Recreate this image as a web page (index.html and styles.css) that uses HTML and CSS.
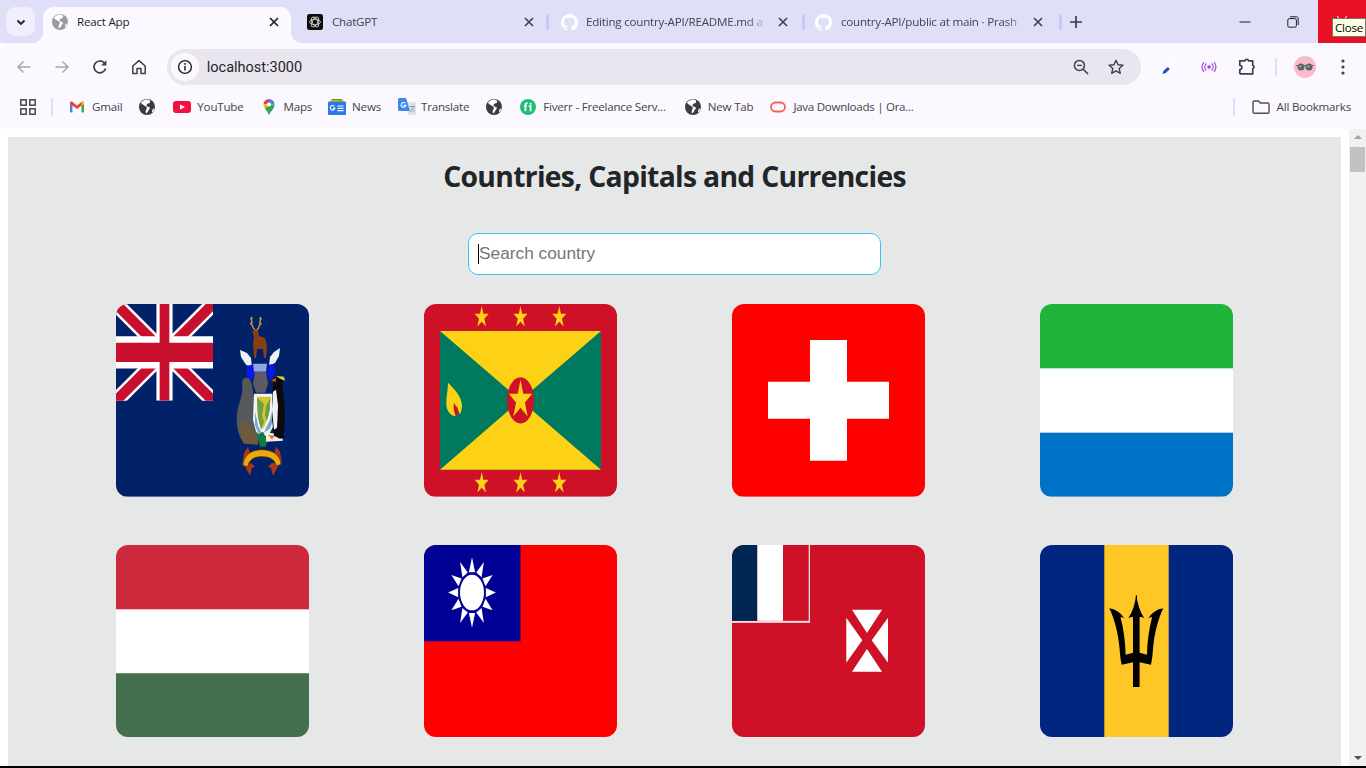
FILE: index.html
```html
<!DOCTYPE html>
<html lang="en">
<head>
<meta charset="utf-8">
<title>React App</title>
<link rel="stylesheet" href="styles.css">
</head>
<body>
<svg class="sprite" aria-hidden="true">
  <defs>
    <polygon id="star" points="0,-1 .2245,-.309 .951,-.309 .3633,.118 .5878,.809 0,.382 -.5878,.809 -.3633,.118 -.951,-.309 -.2245,-.309"/>
    <polygon id="ray" points="-4.600,-20.500 0,-35.300 4.600,-20.500"/>
    <clipPath id="jack"><path d="M30,15h30v15zv15h-30zh-30v-15zv-15h30z"/></clipPath>
    <symbol id="globe" viewBox="0 0 16 16">
      <circle cx="8" cy="8" r="8" fill="currentColor"/>
      <path d="M6.500 .6C5 1.600 3.200 2 2 3.400c.6 1.400 1.800 2.200 3.200 2.800.6 1.400 2 .6 2.400 1.800.4 1 .1 2-.5 2.800C6.600 11.600 6.600 13 7 14.400c1-.5 2-1.800 2.400-3 .6-1.200 1.600-1.600 1.400-3-1-.5-2-.7-3-1.100-.4-.9-.2-1.900.6-2.500.9-.7 2.100-.2 2.600-1.300.3-.8-.1-1.800-.7-2.500-1.300-.4-2.600-.4-3.800-.4zM15.400 9.200c-.9.3-1.800 1-2.200 2-.3.8-.3 1.600 0 2.300 1.200-1.100 2-2.600 2.200-4.300z" fill="#fff"/>
    </symbol>
    <symbol id="github" viewBox="0 0 16 16">
      <path fill="#fff" d="M8 0C3.580 0 0 3.580 0 8c0 3.540 2.290 6.530 5.470 7.590.4.07.55-.17.55-.38v-1.340c-2.230.48-2.690-1.070-2.690-1.070-.36-.92-.89-1.170-.89-1.170-.73-.5.05-.49.05-.49.8.06 1.230.83 1.230.83.71 1.220 1.870.87 2.330.66.07-.52.28-.87.5-1.070-1.780-.2-3.640-.89-3.640-3.950 0-.87.31-1.590.82-2.150-.08-.2-.36-1.020.08-2.120 0 0 .67-.21 2.200.82A7.600 7.600 0 0 1 8 3.870c.68 0 1.360.09 2 .27 1.530-1.040 2.200-.82 2.200-.82.44 1.100.16 1.920.08 2.120.51.56.82 1.270.82 2.150 0 3.070-1.870 3.750-3.650 3.950.29.25.54.73.54 1.480v2.200c0 .21.15.46.55.38A8 8 0 0 0 16 8c0-4.420-3.580-8-8-8z"/>
    </symbol>
    <symbol id="x" viewBox="0 0 12 12">
      <path d="M2 2l8 8M10 2l-8 8" fill="none" stroke="currentColor" stroke-width="1.700"/>
    </symbol>
  </defs>
</svg>

<header class="tabstrip">
  <button class="tab-search" aria-label="Search tabs">
    <svg viewBox="0 0 12 12" width="12" height="12"><path d="M2.500 4.500L6 8l3.500-3.500" fill="none" stroke="#1f1f1f" stroke-width="1.800"/></svg>
  </button>
  <div class="tab tab-active">
    <svg class="fav fav-grey" width="16" height="16"><use href="#globe"/></svg>
    <span class="tab-title">React App</span>
    <svg class="tab-x" width="12" height="12"><use href="#x"/></svg>
  </div>
  <div class="tab tab-gpt">
    <svg class="fav" viewBox="0 0 16 16" width="16" height="16">
      <rect width="16" height="16" rx="2.500" fill="#0d0d0d"/>
      <g fill="none" stroke="#c8c8c8" stroke-width=".9">
        <ellipse cx="8" cy="8" rx="5.400" ry="2.700"/>
        <ellipse cx="8" cy="8" rx="5.400" ry="2.700" transform="rotate(60 8 8)"/>
        <ellipse cx="8" cy="8" rx="5.400" ry="2.700" transform="rotate(120 8 8)"/>
      </g>
    </svg>
    <span class="tab-title tab-dim">ChatGPT</span>
    <svg class="tab-x tab-x-dim" width="12" height="12"><use href="#x"/></svg>
  </div>
  <i class="tab-sep"></i>
  <div class="tab tab-gh1">
    <svg class="fav" width="17" height="17"><use href="#github"/></svg>
    <span class="tab-title tab-dim tab-fade">Editing country-API/README.md a</span>
    <svg class="tab-x tab-x-dim" width="12" height="12"><use href="#x"/></svg>
  </div>
  <i class="tab-sep"></i>
  <div class="tab tab-gh2">
    <svg class="fav" width="17" height="17"><use href="#github"/></svg>
    <span class="tab-title tab-dim tab-fade">country-API/public at main · Prash</span>
    <svg class="tab-x tab-x-dim" width="12" height="12"><use href="#x"/></svg>
  </div>
  <i class="tab-sep"></i>
  <button class="new-tab" aria-label="New tab">
    <svg viewBox="0 0 12 12" width="12" height="12"><path d="M6 0v12M0 6h12" stroke="#3c3c44" stroke-width="1.700"/></svg>
  </button>
  <div class="window-controls">
    <button class="win" aria-label="Minimize"><svg viewBox="0 0 12 12" width="12" height="12"><path d="M.5 6h11" stroke="#1f1f1f" stroke-width="1"/></svg></button>
    <button class="win" aria-label="Restore"><svg viewBox="0 0 12 12" width="12" height="12"><rect x=".8" y="2.600" width="8.600" height="8.600" rx="1.600" fill="none" stroke="#1f1f1f" stroke-width="1"/><path d="M3 .8h6.400a1.800 1.800 0 0 1 1.800 1.800V9" fill="none" stroke="#1f1f1f" stroke-width="1"/></svg></button>
    <button class="win win-close" aria-label="Close"><svg viewBox="0 0 12 12" width="12" height="12"><path d="M1 1l10 10M11 1L1 11" stroke="#fff" stroke-width="1"/></svg></button>
  </div>
  <div class="tooltip">Close</div>
</header>

<nav class="toolbar">
  <button class="tool" aria-label="Back"><svg viewBox="0 0 16 16" width="16" height="16"><path d="M14.500 8H2M7.500 2.500L2 8l5.500 5.500" fill="none" stroke="#a8a8b2" stroke-width="1.500"/></svg></button>
  <button class="tool" aria-label="Forward"><svg viewBox="0 0 16 16" width="16" height="16"><path d="M1.500 8H14M8.500 2.500L14 8l-5.500 5.500" fill="none" stroke="#a8a8b2" stroke-width="1.500"/></svg></button>
  <button class="tool" aria-label="Reload"><svg viewBox="0 0 16 16" width="16" height="16"><path d="M13.600 9.500A5.900 5.900 0 1 1 12 3.600L13.600 5.200" fill="none" stroke="#3f3f47" stroke-width="1.700"/><path d="M14.400 1.200v5.400H9z" fill="#3f3f47"/></svg></button>
  <button class="tool" aria-label="Home"><svg viewBox="0 0 16 16" width="16" height="16"><path d="M1.800 7L8 1.600 14.200 7v7.400H10V9.400H6v5H1.800z" fill="none" stroke="#3f3f47" stroke-width="1.500" stroke-linejoin="round"/></svg></button>
  <div class="omnibox">
    <span class="site-info">
      <svg viewBox="0 0 16 16" width="16" height="16"><circle cx="8" cy="8" r="6.400" fill="none" stroke="#1f1f1f" stroke-width="1.400"/><path d="M8 7v4.400" stroke="#1f1f1f" stroke-width="1.500"/><circle cx="8" cy="4.900" r=".95" fill="#1f1f1f"/></svg>
    </span>
    <span class="url">localhost:3000</span>
    <svg class="omni-zoom" viewBox="0 0 16 16" width="16" height="16"><circle cx="6.400" cy="6.400" r="5" fill="none" stroke="#3f3f47" stroke-width="1.500"/><path d="M10 10l5 5" stroke="#3f3f47" stroke-width="1.600"/><path d="M4 6.400h4.800" stroke="#3f3f47" stroke-width="1.400"/></svg>
    <svg class="omni-star" viewBox="0 0 16 16" width="16" height="16"><path d="M8 1.300l2 4.500 4.900.5-3.700 3.200 1.100 4.800L8 11.800l-4.300 2.500 1.100-4.800L1.100 6.300 6 5.800z" fill="none" stroke="#3f3f47" stroke-width="1.400" stroke-linejoin="round"/></svg>
  </div>
  <div class="ext-group">
    <svg class="ext-pen" viewBox="0 0 16 16" width="16" height="16"><path d="M7 9l6-7 2 1.500-6 7z" fill="#fff"/><path d="M1.500 15l1-3.200 4.300-3.800 2 2-4 4z" fill="#2450c4"/></svg>
    <svg class="ext-cast" viewBox="0 0 16 16" width="16" height="16"><circle cx="8" cy="8" r="1.800" fill="#a63fd1"/><path d="M5.200 4.600a5 5 0 0 0 0 6.800M10.800 4.600a5 5 0 0 1 0 6.800M2.900 3.200a8 8 0 0 0 0 9.600M13.100 3.200a8 8 0 0 1 0 9.600" fill="none" stroke="#ad5fd9" stroke-width="1.400"/></svg>
    <svg class="ext-puzzle" viewBox="0 0 18 18" width="18" height="18"><path d="M1.800 2.800h5.100a2 2 0 0 1 3.800 0h4v4.600a1.700 1.700 0 0 1 0 3.300v5.200H2.800c-.6 0-1-.4-1-1v-3.400a2 2 0 0 0 0-4.200z" fill="none" stroke="#3f3f4f" stroke-width="1.700" stroke-linejoin="round"/></svg>
    <i class="bar-sep"></i>
    <svg class="avatar" viewBox="0 0 22 22" width="22" height="22"><circle cx="11" cy="11" r="11" fill="#f8bccd"/><path d="M2 9.500h18" stroke="#555" stroke-width=".8"/><circle cx="7" cy="11" r="3.500" fill="#5c6660"/><circle cx="15" cy="11" r="3.500" fill="#5c6660"/><circle cx="6.400" cy="10.400" r="1.200" fill="#9aa5a0"/><circle cx="14.400" cy="10.400" r="1.200" fill="#9aa5a0"/></svg>
    <svg class="dots" viewBox="0 0 4 16" width="4" height="16"><circle cx="2" cy="2" r="1.600" fill="#3f3f47"/><circle cx="2" cy="8" r="1.600" fill="#3f3f47"/><circle cx="2" cy="14" r="1.600" fill="#3f3f47"/></svg>
  </div>
</nav>

<nav class="bookmarks">
  <svg class="apps" viewBox="0 0 16 16" width="16" height="16"><g fill="none" stroke="#47474f" stroke-width="1.500"><rect x=".8" y=".8" width="5.400" height="5.400"/><rect x="9.800" y=".8" width="5.400" height="5.400"/><rect x=".8" y="9.800" width="5.400" height="5.400"/><rect x="9.800" y="9.800" width="5.400" height="5.400"/></g></svg>
  <i class="bar-sep bm-sep-left"></i>
  <a class="bm bm-gmail">
    <svg viewBox="0 0 16 16" width="16" height="16"><path d="M1 13.500V4l2.500-.5V13.500H2a1 1 0 0 1-1-1z" fill="#4285f4"/><path d="M12.500 13.500V3.500L15 4v8.500a1 1 0 0 1-1 1z" fill="#34a853"/><path d="M1 4.800V3.900c0-1.200 1.400-1.800 2.300-1.100L8 6.400l4.700-3.600c.9-.7 2.300-.1 2.300 1.100v.9L8 9.900z" fill="#ea4335"/><path d="M12.500 3l2.500-.1V5l-2.500 2z" fill="#fbbc04"/></svg>
    <span>Gmail</span>
  </a>
  <a class="bm bm-icon"><svg class="fav-dark" width="16" height="16"><use href="#globe"/></svg></a>
  <a class="bm bm-yt">
    <svg viewBox="0 0 18 16" width="18" height="16"><rect y="2" width="18" height="12" rx="3" fill="#f40f3f"/><path d="M7 5.400L12 8l-5 2.600z" fill="#fff"/></svg>
    <span>YouTube</span>
  </a>
  <a class="bm bm-maps">
    <svg viewBox="0 0 16 18" width="16" height="18"><path d="M8 1a5.500 5.500 0 0 1 5.500 5.500H8z" fill="#4285f4"/><path d="M2.500 6.500A5.500 5.500 0 0 1 8 1v5.500z" fill="#ea4335"/><path d="M2.500 6.500H8L4 10.800C3 9.600 2.500 8 2.500 6.500z" fill="#fbbc04"/><path d="M13.500 6.500H8L4 10.800c1.600 1.900 3.300 3.700 4 6.700 1-4 5.500-6.500 5.500-11z" fill="#34a853"/><circle cx="8" cy="6.500" r="2.100" fill="#fff"/></svg>
    <span>Maps</span>
  </a>
  <a class="bm bm-news">
    <svg viewBox="0 0 18 18" width="18" height="18"><path d="M3 3l1-2h10l1 2z" fill="#34a853"/><path d="M2 4l.8-1.800h12.400L16 4z" fill="#f4b400"/><rect x="0" y="3.500" width="18" height="13.500" rx="1" fill="#2f78e8"/><path d="M6.200 8.200a2.300 2.300 0 1 0 .6 2H4.900" fill="none" stroke="#fff" stroke-width="1.200"/><path d="M9.500 8h6M9.500 10.300h6M9.500 12.600h6" stroke="#fff" stroke-width="1.200"/></svg>
    <span>News</span>
  </a>
  <a class="bm bm-translate">
    <svg viewBox="0 0 18 18" width="18" height="18"><path d="M8 4h8.500A1.500 1.500 0 0 1 18 5.500V17H10z" fill="#dfe3e8"/><path d="M12 8.500h5M14.500 7.500v1.500M16 9c-.8 2.500-2 4-4 5M13 9.500c.6 1.800 2 3.500 3.800 4.500" fill="none" stroke="#8b9198" stroke-width=".8"/><path d="M1.500 0H8l4 13H1.500A1.500 1.500 0 0 1 0 11.500v-10A1.500 1.500 0 0 1 1.500 0z" fill="#3f86f2"/><path d="M7.300 5.200a2.400 2.400 0 1 0 .6 2.200H5.600" fill="none" stroke="#fff" stroke-width="1.100"/></svg>
    <span>Translate</span>
  </a>
  <a class="bm bm-icon"><svg class="fav-dark" width="16" height="16"><use href="#globe"/></svg></a>
  <a class="bm bm-fiverr">
    <svg viewBox="0 0 16 16" width="16" height="16"><circle cx="8" cy="8" r="8" fill="#1dbf73"/><path d="M5.400 12.200V6.400c0-1.500.8-2.200 2.200-2.200M4 7h3M10.600 12.200V7H8.600" fill="none" stroke="#fff" stroke-width="1.700"/><circle cx="10.600" cy="4.700" r="1" fill="#fff"/></svg>
    <span>Fiverr - Freelance Serv...</span>
  </a>
  <a class="bm bm-newtab"><svg class="fav-dark" width="16" height="16"><use href="#globe"/></svg><span>New Tab</span></a>
  <a class="bm bm-java">
    <svg viewBox="0 0 16 16" width="16" height="16"><rect x="1" y="3.500" width="14" height="9" rx="4.500" fill="none" stroke="#f0634f" stroke-width="1.800"/></svg>
    <span>Java Downloads | Ora...</span>
  </a>
  <i class="bar-sep bm-sep-right"></i>
  <a class="bm bm-all">
    <svg viewBox="0 0 18 16" width="18" height="16"><path d="M1 13V3.200C1 2.500 1.500 2 2.200 2h4.300L8.300 4h7.500c.7 0 1.200.5 1.200 1.200V13c0 .7-.5 1.200-1.200 1.200H2.200C1.500 14.200 1 13.700 1 13z" fill="none" stroke="#4f4f57" stroke-width="1.400"/></svg>
    <span>All Bookmarks</span>
  </a>
</nav>

<div class="viewport">
  <main class="page">
    <h1 class="title">Countries, Capitals and Currencies</h1>
    <div class="search">
      <input class="search-input" type="text" placeholder="Search country" aria-label="Search country">
    </div>
    <section class="flags">
      <div class="flag">
        <svg viewBox="0 0 193 193" preserveAspectRatio="none">
          <rect width="193" height="193" fill="#012169"/>
          <svg x="0" y="0" width="97" height="97" viewBox="0 0 60 30" preserveAspectRatio="none">
            <path d="M0,0 L60,30 M60,0 L0,30" stroke="#fff" stroke-width="6"/>
            <path d="M0,0 L60,30 M60,0 L0,30" stroke="#c8102e" stroke-width="4" clip-path="url(#jack)"/>
            <path d="M30,0v30M0,15h60" stroke="#fff" stroke-width="10"/>
            <path d="M30,0v30M0,15h60" stroke="#c8102e" stroke-width="6"/>
          </svg>
          <!-- coat of arms -->
          <path d="M140 27c-4-3-5-9-4-14M140 27c3-2 5-8 4-14M136.500 18l-2-4M137 22l-3-3M143.500 18l2-4M143 22l2.500-3" fill="none" stroke="#c09a3e" stroke-width="1.300"/>
          <path d="M136 27l6-1 1 6 6 2 2 8-1 12h-2l-1-9h-6l-1 9h-2l-1-14 1-7z" fill="#8a3e14"/>
          <path d="M124 46l7 3 4 5 1 10-6-3-5-8zM164 44l-6 4-4 5-1 9 6-3 4-7z" fill="#eef2f6"/>
          <path d="M131 62l5-1 3 8-3 8-3-2-3-6zM158 60l-5 1-2 8 2 7 4-2 2-7z" fill="#0a18e8"/>
          <path d="M137 60h14l-1 8h-12z" fill="#8ea7e0"/>
          <path d="M139 68h11l2 12-3 9h-9l-3-9z" fill="#5f5a66"/>
          <path d="M131 74c-3 0-5 2-5 5 1 6 0 12-2 18-3 9-4 17-3 24 1 8 3 14 7 18h14l1-12-6-12 2-14-3-20c-1-4-3-7-5-7z" fill="#57585c"/>
          <path d="M125 116c2 4 4 4 7 3l10 16v6l-14-1c-3-6-5-14-3-24z" fill="#6f5a3c"/>
          <path d="M138 90h19l3 3-1 26-5 10-7 5-7-6-3-12z" fill="#eef4f8"/>
          <path d="M141 93h14l-2 18-4 10-3 5-3-8-2-12z" fill="#d6c52c"/>
          <path d="M141 94l7 6-2 12 2 6-3 8-3-12zM154 95l-4 7-1 10 2 5 3-12z" fill="#6d9e4a"/>
          <path d="M139 108l2 8 1 6 4 8-4-1-3-8zM156 108l-2 8-4 8-2 5 6-4 3-8z" fill="#7ea6c8"/>
          <path d="M141 131l6-3 4 8-1 7h-6z" fill="#147a43"/>
          <path d="M150 129l15 1 2 7-17 1z" fill="#f3eee6"/>
          <path d="M152 131l7 1-3 4z" fill="#d98436"/>
          <path d="M158 74l5-2 4 2 1 3-2 2 2 16 1 20-1 14-1 3 2 2-5 1-6-3-2-16 0-20 1-14z" fill="#0b0b0d"/>
          <path d="M157 88l3-2 2 16-1 22-3 2-2-20z" fill="#eef2f6"/>
          <path d="M160 72l8 1 1 4-5-2z" fill="#e8c53a"/>
          <path d="M155 77l5-3 0 4z" fill="#c2561e"/>
          <path d="M126 161l2-12 4-6 2 7-2 5-1 7zM166 159l-2-11-4-5-2 7 2 5 1 6z" fill="#b0341c"/>
          <path d="M129 163l5 9 2-8 3-1-4-4zM163 161l-6 11-2-8-3-1 4-4z" fill="#b0341c"/>
          <path d="M127 162c0-10 8-16 19-16s19 6 19 15l-5 1c-1-6-6-9-14-9s-13 3-14 10z" fill="#eda90c" stroke="#3a2a08" stroke-width=".7"/>
        </svg>
      </div>

      <div class="flag">
        <svg viewBox="0 0 193 193" preserveAspectRatio="none">
          <rect width="193" height="193" fill="#ce1126"/>
          <rect x="16" y="27" width="161" height="139" fill="#007a5e"/>
          <path d="M16 27H177L96.500 96.500zM16 166H177L96.500 96.500z" fill="#fcd116"/>
          <ellipse cx="96.500" cy="96.500" rx="13.500" ry="23.200" fill="#ce1126"/>
          <use href="#star" transform="translate(96.500 96.300) scale(12.300 20.300)" fill="#fcd116"/>
          <use href="#star" transform="translate(57.700 13.400) scale(7.400 11.400)" fill="#fcd116"/>
          <use href="#star" transform="translate(96.500 13.400) scale(7.400 11.400)" fill="#fcd116"/>
          <use href="#star" transform="translate(135.300 13.400) scale(7.400 11.400)" fill="#fcd116"/>
          <use href="#star" transform="translate(57.700 179.700) scale(7.400 11.400)" fill="#fcd116"/>
          <use href="#star" transform="translate(96.500 179.700) scale(7.400 11.400)" fill="#fcd116"/>
          <use href="#star" transform="translate(135.300 179.700) scale(7.400 11.400)" fill="#fcd116"/>
          <path d="M24 79c6 6 13 13 14 22 0 4-1 9-3 9l-2-8c-2 3-2 7-1 10-3 1-7-2-9-7-2-8 1-17 1-26z" fill="#fcd116"/>
          <path d="M30 99l5 9-3 5c-2-4-3-9-2-14z" fill="#ce1126"/>
        </svg>
      </div>

      <div class="flag">
        <svg viewBox="0 0 193 193" preserveAspectRatio="none">
          <rect width="193" height="193" fill="#ff0000"/>
          <path d="M78 36h37v42h42v37h-42v42H78v-42H36V78h42z" fill="#fff"/>
        </svg>
      </div>

      <div class="flag">
        <svg viewBox="0 0 193 193" preserveAspectRatio="none">
          <rect width="193" height="65" fill="#1eb53a"/>
          <rect y="64.500" width="193" height="64.500" fill="#fff"/>
          <rect y="129" width="193" height="64" fill="#0072c6"/>
        </svg>
      </div>

      <div class="flag">
        <svg viewBox="0 0 193 193" preserveAspectRatio="none">
          <rect width="193" height="65" fill="#cd2a3e"/>
          <rect y="64.500" width="193" height="64.500" fill="#fff"/>
          <rect y="128.500" width="193" height="64.500" fill="#436f4d"/>
        </svg>
      </div>

      <div class="flag">
        <svg viewBox="0 0 193 193" preserveAspectRatio="none">
          <rect width="193" height="193" fill="#fe0000"/>
          <rect width="96.500" height="96.500" fill="#000095"/>
          <g transform="translate(48 47.700) scale(.674 1)" fill="#fff">
            <use href="#ray"/>
            <use href="#ray" transform="rotate(30)"/>
            <use href="#ray" transform="rotate(60)"/>
            <use href="#ray" transform="rotate(90)"/>
            <use href="#ray" transform="rotate(120)"/>
            <use href="#ray" transform="rotate(150)"/>
            <use href="#ray" transform="rotate(180)"/>
            <use href="#ray" transform="rotate(210)"/>
            <use href="#ray" transform="rotate(240)"/>
            <use href="#ray" transform="rotate(270)"/>
            <use href="#ray" transform="rotate(300)"/>
            <use href="#ray" transform="rotate(330)"/>
            <circle r="18.800" fill="#fff" stroke="#000095" stroke-width="2"/>
          </g>
        </svg>
      </div>

      <div class="flag">
        <svg viewBox="0 0 193 193" preserveAspectRatio="none">
          <rect width="193" height="193" fill="#ce1126"/>
          <rect width="78" height="78" fill="#f7dde0"/>
          <rect width="76.700" height="76" fill="#ce1126"/>
          <rect width="25.300" height="76" fill="#002654"/>
          <rect x="25.300" width="25.700" height="76" fill="#fff"/>
          <path d="M120 65h30l-15 23.300zM120 127h30l-15-22.700zM114.300 73v45l16-22.500zM156 73v45l-16.300-22.500z" fill="#fff"/>
        </svg>
      </div>

      <div class="flag">
        <svg viewBox="0 0 193 193" preserveAspectRatio="none">
          <rect width="193" height="193" fill="#00267f"/>
          <rect x="64.300" width="64.400" height="193" fill="#ffc726"/>
          <path id="trident" d="M96.800 50H96.300C95 59 92.500 67 88.300 73.300C90 72.500 91.500 72.200 93 72.200L93 108L85.600 110C85.500 97 83.500 84 80.500 72.500C81.500 72.200 83 72.500 84.500 74C81 67.500 75 64 69.300 63.300C74 73 78 87 79.500 103C80 110 80.500 115 81.700 120L93 117.500L93 142.300H96.800Z" fill="#000"/>
          <use href="#trident" transform="translate(192.600 0) scale(-1 1)"/>
        </svg>
      </div>
    </section>
  </main>
  <aside class="scrollbar">
    <span class="sb-up"></span>
    <span class="sb-thumb"></span>
    <span class="sb-down"></span>
  </aside>
</div>
<footer class="edge"></footer>
</body>
</html>
```

FILE: styles.css
```css
* { box-sizing: border-box; }
html, body { margin: 0; height: 100%; }
body {
  width: 1366px;
  height: 768px;
  overflow: hidden;
  display: flex;
  flex-direction: column;
  background: #fff;
  font-family: "Open Sans", "Noto Sans", sans-serif;
  color: #1f1f1f;
}
.sprite { display: none; }
button { border: 0; background: none; padding: 0; display: flex; align-items: center; justify-content: center; }

/* tab strip */
.tabstrip {
  position: relative;
  height: 43px;
  flex: none;
  display: flex;
  align-items: flex-end;
  background: #dfe0f7;
}
.tab-search {
  width: 29px;
  height: 29px;
  margin: 0 8px 7px 6px;
  border-radius: 9px;
  background: #f0eefc;
}
.tab {
  height: 36px;
  display: flex;
  align-items: center;
  flex: none;
  font-size: 11.600px;
  letter-spacing: -.22px;
}
.tab-active {
  position: relative;
  width: 248px;
  padding: 0 11px 6px 9px;
  background: #fbf8ff;
  border-radius: 10px 10px 0 0;
}
.tab-active::before, .tab-active::after {
  content: "";
  position: absolute;
  bottom: 0;
  width: 10px;
  height: 10px;
}
.tab-active::before { left: -10px; background: radial-gradient(circle at 0 0, transparent 9.500px, #fbf8ff 10px); }
.tab-active::after { right: -10px; background: radial-gradient(circle at 100% 0, transparent 9.500px, #fbf8ff 10px); }
.fav { flex: none; }
.fav-grey { color: #9a9aa3; }
.fav-dark { color: #3b3b40; flex: none; display: block; }
.tab-title {
  flex: 1;
  min-width: 0;
  margin-left: 9px;
  margin-bottom: 2px;
  white-space: nowrap;
  overflow: hidden;
}
.tab-dim { color: #44444c; }
.tab-fade {
  -webkit-mask-image: linear-gradient(to right, #000 88%, transparent 100%);
  mask-image: linear-gradient(to right, #000 88%, transparent 100%);
}
.tab-x { flex: none; color: #1f1f1f; }
.tab-x-dim { color: #44444c; }
.tab-gpt { width: 254px; padding: 0 10px 6px 16px; }
.tab-gh1 { width: 252px; padding: 0 12px 6px 12px; }
.tab-gh1 .tab-title { margin-left: 8px; margin-right: 8px; }
.tab-gh2 { width: 253px; padding: 0 14px 6px 10px; }
.tab-gh2 .tab-title { margin-left: 9px; margin-right: 4px; }
.tab-sep {
  flex: none;
  width: 3px;
  height: 16px;
  margin: 0 0 13px 1px;
  background: #c3c9fa;
  border-radius: 1px;
}
.new-tab { width: 12px; height: 12px; margin: 0 0 15px 8px; }
.window-controls { margin-left: auto; display: flex; align-self: stretch; }
.win { width: 48px; height: 43px; padding-right: 2px; }
.win-close { background: #e81123; align-items: flex-start; padding: 15px 0 0; }
.tooltip {
  position: absolute;
  top: 18px;
  left: 1332px;
  width: 34px;
  height: 19px;
  border: 1px solid #767676;
  background: #ffffe6;
  color: #000;
  font-size: 11.600px;
  letter-spacing: -.22px;
  line-height: 17px;
  padding-left: 2px;
  white-space: nowrap;
}

/* toolbar */
.toolbar {
  height: 44px;
  flex: none;
  display: flex;
  align-items: center;
  padding: 4px 0 0 5px;
  background: #fbf8ff;
  border-radius: 8px 8px 0 0;
}
.tool { width: 38.200px; height: 36px; flex: none; }
.omnibox {
  flex: none;
  width: 974px;
  height: 36px;
  margin: 0 0 0 9px;
  display: flex;
  align-items: center;
  padding: 0 17px 0 4px;
  border-radius: 18px;
  background: #e9e6f0;
}
.site-info {
  width: 28px;
  height: 28px;
  flex: none;
  border-radius: 50%;
  background: #fbf8ff;
  display: flex;
  align-items: center;
  justify-content: center;
}
.url { flex: 1; margin: 1px 0 0 8px; font-family: "Roboto", sans-serif; font-size: 14.500px; color: #1f1f1f; }
.omni-zoom { margin-right: 19px; }
.ext-group { display: flex; align-items: center; flex: none; }
.ext-group svg { flex: none; }
.ext-pen { margin-left: 20px; }
.ext-cast { margin-left: 24px; }
.ext-puzzle { margin-left: 21px; }
.bar-sep { display: block; flex: none; width: 2px; height: 18px; background: #dfe0f7; }
.ext-group .bar-sep { margin-left: 19px; }
.avatar { margin-left: 17px; }
.dots { margin-left: 25px; }

/* bookmarks */
.bookmarks {
  height: 42px;
  flex: none;
  display: flex;
  align-items: center;
  padding: 0 0 2px 20px;
  background: #fbf8ff;
  font-size: 11.600px;
  letter-spacing: -.22px;
  color: #44444c;
}
.apps { flex: none; }
.bm-sep-left { margin: 0 16px 0 15px; }
.bm {
  display: flex;
  align-items: center;
  gap: 7px;
  margin-right: 17px;
  flex: none;
  white-space: nowrap;
}
.bm span { margin-bottom: 2px; }
.bm svg { display: block; flex: none; }
.bm-icon { margin-right: 18px; }
.bm-fiverr { margin-right: 19px; }
.bm-yt, .bm-news { gap: 6px; }
.bm-translate { gap: 5px; }
.bm-news { margin-left: -1px; }
.bm-java span { letter-spacing: -.3px; }
.bm-sep-right { margin-left: auto; margin-right: 17px; }
.bm-all { margin-right: 15px; gap: 7px; }

/* page area */
.viewport {
  flex: 1;
  min-height: 0;
  display: flex;
  background: #fff;
}
.page {
  width: 1333px;
  margin: 8px 0 0 8px;
  background: #e6e8e7;
  overflow: hidden;
  flex: none;
}
.title {
  margin: 0;
  padding-top: 20px;
  text-align: center;
  font-size: 28.300px;
  letter-spacing: -.7px;
  line-height: 38px;
  font-weight: 700;
  color: #212529;
}
.search {
  position: relative;
  width: 413px;
  margin: 38px auto 0;
}
.search::before {
  content: "";
  position: absolute;
  left: 10px;
  top: 11px;
  width: 1px;
  height: 20px;
  background: #000;
}
.search-input {
  display: block;
  width: 413px;
  height: 42px;
  padding: 0 10px 2px;
  border: 1px solid #35c5f5;
  border-radius: 10px;
  background: #fff;
  font-family: "Liberation Sans", Arial, sans-serif;
  font-size: 17.300px;
  outline: none;
}
.search-input::placeholder { color: #757575; opacity: 1; }
.flags {
  display: grid;
  grid-template-columns: repeat(4, 193px);
  column-gap: 115px;
  row-gap: 48px;
  justify-content: center;
  margin-top: 29px;
}
.flag {
  width: 193px;
  height: 192.600px;
  border-radius: 12px;
  overflow: hidden;
}
.flag > svg { display: block; width: 100%; height: 100%; }

/* scrollbar */
.scrollbar {
  width: 17px;
  margin-left: 8px;
  flex: none;
  background: #f1f1f1;
  display: flex;
  flex-direction: column;
  align-items: center;
}
.sb-up {
  margin-top: 6px;
  border-left: 4px solid transparent;
  border-right: 4px solid transparent;
  border-bottom: 4px solid #a3a3a3;
}
.sb-thumb {
  width: 15px;
  height: 25px;
  margin-top: 8px;
  background: #c1c1c1;
}
.sb-down {
  margin-top: auto;
  margin-bottom: 6px;
  border-left: 4px solid transparent;
  border-right: 4px solid transparent;
  border-top: 4px solid #505050;
}
.edge { height: 2px; flex: none; background: #000; }
```
